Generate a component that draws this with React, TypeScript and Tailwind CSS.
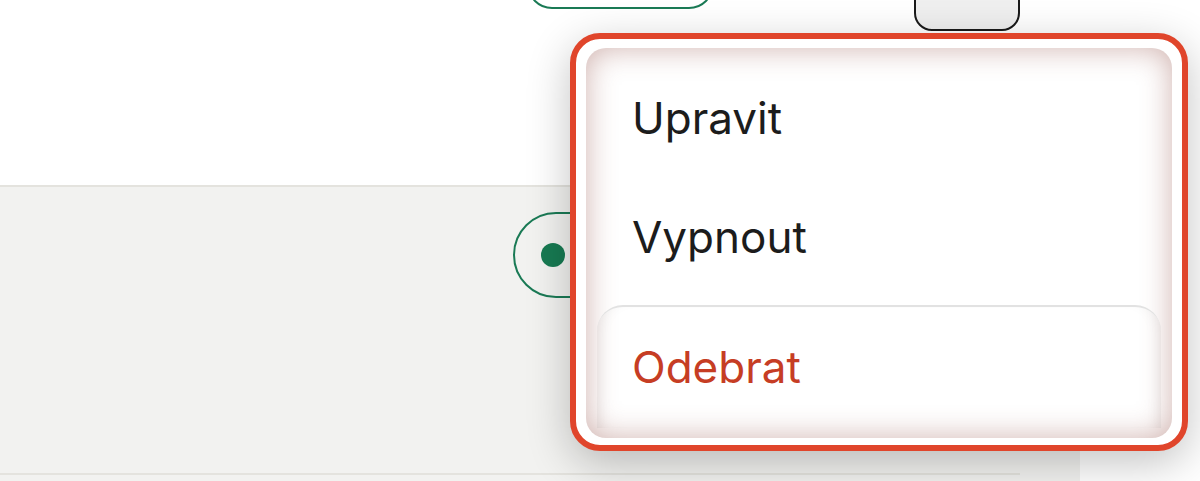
import React from "react";

export default function App() {
  return (
    <div
      className="relative w-[1200px] h-[481px] overflow-hidden bg-white flex"
      style={{ fontFamily: "Inter, 'Noto Sans', sans-serif" }}
    >
      {/* Page content column */}
      <div className="w-[1080px] flex flex-col">
        {/* Top row */}
        <div className="h-[185px] bg-white flex items-start pl-[527px] pr-[60px]">
          <div className="w-[187px] h-[50px] mt-[-41px] rounded-full border-[2.5px] border-[#1a7a55]" />
          <div className="ml-auto w-[106px] h-[62px] mt-[-31px] rounded-[18px] border-[2.5px] border-[#1a1a1a] bg-[#efefef]" />
        </div>
        <div className="h-[2px] bg-[#e4e3de]" />
        {/* Second row */}
        <div className="flex-1 bg-[#f2f2f0] flex flex-col">
          <div className="h-[286px] flex items-start pl-[513px] pr-[60px] pt-[25px]">
            <div className="w-[190px] h-[86px] rounded-full border-[2.5px] border-[#1a7a55] flex items-center pl-[26px]">
              <div className="w-[24px] h-[24px] rounded-full bg-[#177a52]" />
            </div>
          </div>
          <div className="mr-[60px] h-[2px] bg-[#e4e3de]" />
        </div>
      </div>
      {/* Right strip */}
      <div className="flex-1 bg-white" />

      {/* Dropdown menu overlay */}
      <div className="absolute left-[570px] top-[33px] w-[618px] h-[418px] rounded-[30px] border-[6px] border-[#e0452b] bg-white pt-[9px] px-[10px] pb-[7px] shadow-[0_12px_44px_rgba(0,0,0,0.24)]">
        <div className="h-full rounded-[20px] bg-white shadow-[inset_0_0_30px_rgba(140,70,60,0.42)] pt-[10px] flex flex-col overflow-hidden">
          <div className="h-[119px] flex items-center pl-[46px] text-[44px] leading-none text-[#1c1c1c]">
            Upravit
          </div>
          <div className="h-[119px] flex items-center pl-[46px] text-[44px] leading-none text-[#1c1c1c]">
            Vypnout
          </div>
          <div className="mt-[9px] mx-[11px] h-[123px] rounded-t-[26px] border-t-2 border-[#e2e2e2] shadow-[inset_12px_0_16px_-12px_rgba(0,0,0,0.08),inset_-12px_0_16px_-12px_rgba(0,0,0,0.08)] flex items-center pl-[35px] pb-[2px] text-[44px] leading-none text-[#c63d24]">
            Odebrat
          </div>
        </div>
      </div>
    </div>
  );
}
